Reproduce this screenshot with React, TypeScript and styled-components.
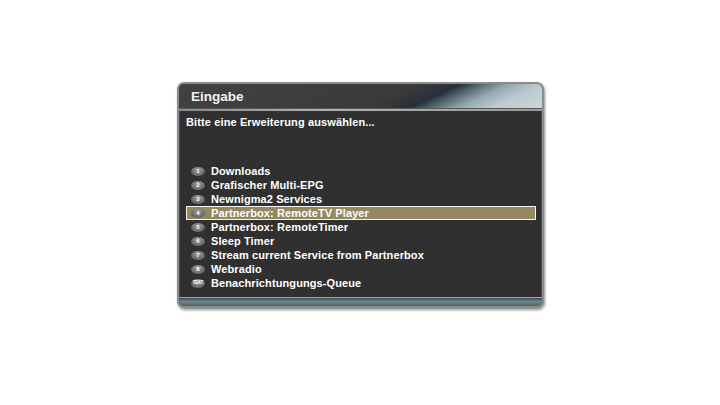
import React from "react";
import styled, { createGlobalStyle } from "styled-components";

const Global = createGlobalStyle`
  html, body { margin: 0; padding: 0; background: #ffffff; }
  body { font-family: "Liberation Sans", Arial, sans-serif; }
`;

const Page = styled.div`
  width: 720px;
  height: 405px;
  padding: 82px 0 0 177px;
  box-sizing: border-box;
`;

const Frame = styled.div`
  width: 367px;
  height: 226px;
  box-sizing: border-box;
  border: 2px solid #8c8c8c;
  border-radius: 7px;
  background: #303030;
  box-shadow: 1px 2px 3px rgba(0, 0, 0, 0.45), inset 0 0 0 1px #4a4a4a;
  display: flex;
  flex-direction: column;
  overflow: hidden;
`;

const TitleBar = styled.div`
  height: 24px;
  flex: none;
  display: flex;
  align-items: center;
  padding-left: 12px;
  color: #f2f2f2;
  font-size: 13.5px;
  font-weight: bold;
  background: linear-gradient(
    155deg,
    #424242 0%,
    #3a3a3a 58%,
    #30343a 64%,
    #26303a 68%,
    #56686f 73%,
    #98a9b0 80%,
    #bccbd0 88%,
    #cad6da 100%
  );
  border-bottom: 1px solid #5a5a5a;
`;

const Separator = styled.div`
  height: 2px;
  flex: none;
  background: linear-gradient(90deg, #8a8a8a, #b0b0b0 40%, #9a9a9a);
`;

const Content = styled.div`
  flex: 1;
  padding: 4px 6px 0 7px;
  display: flex;
  flex-direction: column;
`;

const Prompt = styled.div`
  color: #ffffff;
  font-size: 11px;
  font-weight: bold;
  line-height: 14px;
  height: 14px;
  letter-spacing: 0.12px;
  margin-bottom: 35px;
`;

const List = styled.div`
  display: flex;
  flex-direction: column;
`;

const Row = styled.div<{ $selected?: boolean }>`
  height: 14px;
  box-sizing: border-box;
  display: flex;
  align-items: center;
  gap: 6px;
  padding-left: ${(p) => (p.$selected ? "4px" : "5px")};
  color: #ffffff;
  font-size: 11px;
  font-weight: bold;
  letter-spacing: 0.1px;
  white-space: nowrap;
  background: ${(p) => (p.$selected ? "#948862" : "transparent")};
  border: ${(p) => (p.$selected ? "1px solid #f4f4f4" : "none")};
`;

const Pill = styled.span<{ $wide?: boolean }>`
  flex: none;
  width: 14px;
  height: 9px;
  border-radius: 50%;
  background: radial-gradient(ellipse at 50% 30%, #a0a0a0, #5e5e5e 80%);
  display: flex;
  align-items: center;
  justify-content: center;
  color: #ffffff;
  font-size: ${(p) => (p.$wide ? "4.5px" : "6px")};
  font-weight: bold;
  line-height: 1;
  letter-spacing: ${(p) => (p.$wide ? "-0.2px" : "0")};
`;

const BottomLine = styled.div`
  height: 1px;
  flex: none;
  background: #a8a8a8;
`;

const BottomBar = styled.div`
  height: 8px;
  flex: none;
  background: linear-gradient(180deg, #3b4a55 0%, #6f8692 45%, #50636e 100%);
`;

const items = [
  { key: "1", label: "Downloads" },
  { key: "2", label: "Grafischer Multi-EPG" },
  { key: "3", label: "Newnigma2 Services" },
  { key: "4", label: "Partnerbox: RemoteTV Player", selected: true },
  { key: "5", label: "Partnerbox: RemoteTimer" },
  { key: "6", label: "Sleep Timer" },
  { key: "7", label: "Stream current Service from Partnerbox" },
  { key: "8", label: "Webradio" },
  { key: "TEXT", label: "Benachrichtungungs-Queue" },
];

export default function App() {
  return (
    <>
      <Global />
      <Page>
        <Frame>
          <TitleBar>Eingabe</TitleBar>
          <Separator />
          <Content>
            <Prompt>Bitte eine Erweiterung auswählen...</Prompt>
            <List>
              {items.map((it) => (
                <Row key={it.key} $selected={it.selected}>
                  <Pill $wide={it.key.length > 1}>{it.key}</Pill>
                  {it.label}
                </Row>
              ))}
            </List>
          </Content>
          <BottomLine />
          <BottomBar />
        </Frame>
      </Page>
    </>
  );
}
